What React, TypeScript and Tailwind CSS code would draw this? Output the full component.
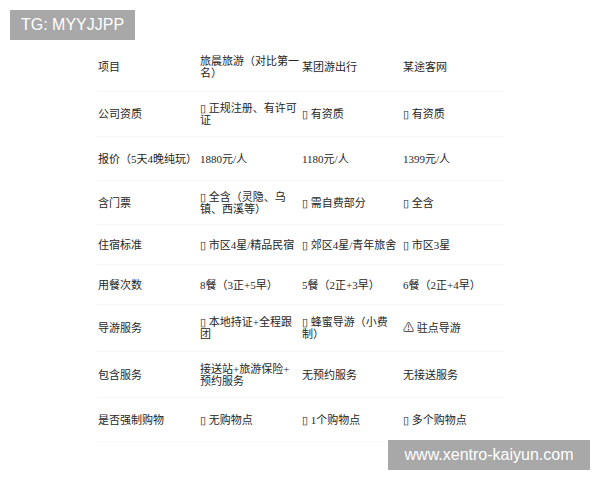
const rows: { h: string; cells: string[][] }[] = [
  { h: "h-[49px]", cells: [["项目"], ["旅晨旅游（对比第一", "名）"], ["某团游出行"], ["某途客网"]] },
  { h: "h-[45px]", cells: [["公司资质"], ["▯ 正规注册、有许可", "证"], ["▯ 有资质"], ["▯ 有资质"]] },
  { h: "h-[44px]", cells: [["报价（5天4晚纯玩）"], ["1880元/人"], ["1180元/人"], ["1399元/人"]] },
  { h: "h-[44px]", cells: [["含门票"], ["▯ 全含（灵隐、乌", "镇、西溪等）"], ["▯ 需自费部分"], ["▯ 全含"]] },
  { h: "h-[40px]", cells: [["住宿标准"], ["▯ 市区4星/精品民宿"], ["▯ 郊区4星/青年旅舍"], ["▯ 市区3星"]] },
  { h: "h-[40px]", cells: [["用餐次数"], ["8餐（3正+5早）"], ["5餐（2正+3早）"], ["6餐（2正+4早）"]] },
  { h: "h-[47px]", cells: [["导游服务"], ["▯ 本地持证+全程跟", "团"], ["▯ 蜂蜜导游（小费", "制）"], ["⚠ 驻点导游"]] },
  { h: "h-[46px]", cells: [["包含服务"], ["接送站+旅游保险+", "预约服务"], ["无预约服务"], ["无接送服务"]] },
  { h: "h-[44px]", cells: [["是否强制购物"], ["▯ 无购物点"], ["▯ 1个购物点"], ["▯ 多个购物点"]] },
]

export default function App() {
  return (
    <div className="relative w-[600px] h-[480px] bg-white overflow-hidden font-['Liberation_Serif','Noto_Sans_CJK_SC',serif] text-[11px] leading-[12px] text-[#262626]">
      <div className="pt-[43px] pl-[97px]">
        <div className="w-fit">
          {rows.map((r, i) => (
            <div key={i} className={`grid grid-cols-[102px_102px_101px_102px] ${r.h} border-b border-[#f7f7f7]`}>
              {r.cells.map((lines, j) => (
                <div key={j} className="flex flex-col justify-center pl-[1px] whitespace-nowrap">
                  {lines.map((l, k) => (
                    <span key={k}>{l}</span>
                  ))}
                </div>
              ))}
            </div>
          ))}
        </div>
      </div>

      <div className="absolute left-[10px] top-[10px] w-[125px] h-[30px] bg-[#a8a8a8] flex items-center justify-center font-['Liberation_Sans',sans-serif] text-[16px] text-white">
        TG: MYYJJPP
      </div>
      <div className="absolute left-[388px] top-[440px] w-[202px] h-[30px] bg-[#a8a8a8] flex items-center justify-center font-['Liberation_Sans',sans-serif] text-[16px] text-white">
        www.xentro-kaiyun.com
      </div>
    </div>
  )
}
